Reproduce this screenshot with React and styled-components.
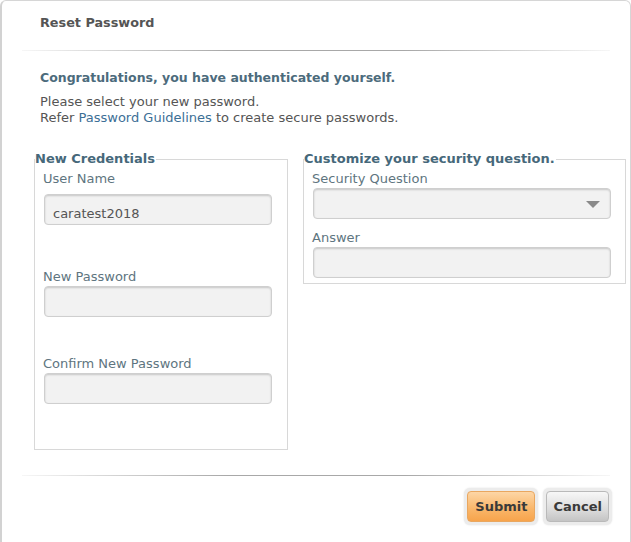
import React from "react";
import styled, { createGlobalStyle } from "styled-components";

const GlobalStyle = createGlobalStyle`
  html, body {
    margin: 0;
    padding: 0;
    background: #ffffff;
  }
  body {
    font-family: "DejaVu Sans", Verdana, sans-serif;
    font-size: 13px;
    color: #555555;
  }
`;

const Card = styled.div`
  box-sizing: border-box;
  width: 631px;
  min-height: 560px;
  border: 1px solid #d6d6d6;
  border-left: 2px solid #d2d2d2;
  border-radius: 6px 6px 0 0;
  background: #fff;
`;

const Header = styled.div`
  height: 42px;
  padding: 0 0 7px 38px;
  display: flex;
  align-items: center;
`;

const Title = styled.h1`
  margin: 0;
  font-size: 12.8px;
  font-weight: bold;
  color: #555;
`;

const Divider = styled.div`
  height: 1px;
  margin: 0 20px;
  background: linear-gradient(
    to right,
    rgba(170, 170, 170, 0.1),
    #a8a8a8 35%,
    #a8a8a8 65%,
    rgba(170, 170, 170, 0.1)
  );
`;

const Intro = styled.div`
  padding: 19px 0 0 38px;
`;

const Congrats = styled.p`
  margin: 0 0 8px;
  font-weight: bold;
  font-size: 12.5px;
  line-height: 16px;
  color: #4c6b7c;
`;

const Line = styled.p`
  margin: 0;
  line-height: 16px;
  color: #555;
`;

const Link = styled.a`
  color: #3c6f96;
  text-decoration: none;
`;

const Columns = styled.div`
  display: flex;
  align-items: flex-start;
  gap: 15px;
  padding: 25px 0 0 32px;
`;

const Group = styled.fieldset`
  box-sizing: border-box;
  width: ${(p) => p.$width}px;
  margin: 0;
  padding: 4px 14px ${(p) => p.$bottom}px 8px;
  border: 1px solid #d8d8d8;
  display: flex;
  flex-direction: column;
`;

const Legend = styled.legend`
  margin-left: -8px;
  padding: 0 1px 0 0;
  font-weight: bold;
  font-size: 13px;
  line-height: 16px;
  color: #46687a;
`;

const Label = styled.label`
  display: block;
  margin-top: ${(p) => p.$top || 0}px;
  line-height: 16px;
  color: #5e7580;
`;

const Input = styled.input`
  box-sizing: border-box;
  display: block;
  width: ${(p) => p.$width}px;
  height: 31px;
  margin: ${(p) => p.$top || 1}px 0 0 1px;
  padding: ${(p) => (p.$low ? "8px 8px 0" : "0 8px")};
  border: 1px solid #cfcfcf;
  border-radius: 4px;
  background: #f2f2f2;
  box-shadow: inset 0 1px 2px rgba(0, 0, 0, 0.18);
  font-family: "DejaVu Sans", Verdana, sans-serif;
  font-size: 13px;
  color: #555;
  outline: none;
`;

const SelectBox = styled.div`
  box-sizing: border-box;
  position: relative;
  width: 298px;
  height: 31px;
  margin: 1px 0 0 1px;
  border: 1px solid #cfcfcf;
  border-radius: 4px;
  background: #f2f2f2;
  box-shadow: inset 0 1px 2px rgba(0, 0, 0, 0.18);
`;

const Arrow = styled.span`
  position: absolute;
  right: 10px;
  top: 12px;
  width: 0;
  height: 0;
  border-left: 7px solid transparent;
  border-right: 7px solid transparent;
  border-top: 7px solid #8a8a8a;
`;

const Footer = styled.div`
  margin-top: 25px;
`;

const Actions = styled.div`
  display: flex;
  justify-content: flex-end;
  gap: 5px;
  padding: 12px 18px 0 0;
`;

const Halo = styled.div`
  padding: 3px;
  border-radius: 6px;
  background: #ececec;
  box-shadow: 0 0 2px rgba(0, 0, 0, 0.12);
`;

const Button = styled.button`
  display: block;
  height: 31px;
  padding: 0 ${(p) => p.$pad}px;
  border: 1px solid ${(p) => (p.$primary ? "#e9a760" : "#b9b9b9")};
  border-radius: 4px;
  background: ${(p) =>
    p.$primary
      ? "linear-gradient(to bottom, #fdd6a6, #f9b568 60%, #f7a44c)"
      : "linear-gradient(to bottom, #f7f7f7, #dcdcdc 60%, #c4c4c4)"};
  font-family: "DejaVu Sans", Verdana, sans-serif;
  font-size: 13px;
  font-weight: 600;
  color: #3a3a3a;
  cursor: pointer;
`;

export default function App() {
  return (
    <>
      <GlobalStyle />
      <Card>
        <Header>
          <Title>Reset Password</Title>
        </Header>
        <Divider />
        <Intro>
          <Congrats>Congratulations, you have authenticated yourself.</Congrats>
          <Line>Please select your new password.</Line>
          <Line>
            Refer <Link href="#">Password Guidelines</Link> to create secure
            passwords.
          </Line>
        </Intro>
        <Columns>
          <Group $width={254} $bottom={45}>
            <Legend>New Credentials</Legend>
            <Label>User Name</Label>
            <Input $width={228} $top={7} $low readOnly value="caratest2018" />
            <Label $top={44}>New Password</Label>
            <Input $width={228} type="password" />
            <Label $top={39}>Confirm New Password</Label>
            <Input $width={228} type="password" />
          </Group>
          <Group $width={323} $bottom={5}>
            <Legend>Customize your security question.</Legend>
            <Label>Security Question</Label>
            <SelectBox>
              <Arrow />
            </SelectBox>
            <Label $top={11}>Answer</Label>
            <Input $width={298} />
          </Group>
        </Columns>
        <Footer>
          <Divider />
          <Actions>
            <Halo>
              <Button $primary $pad={7}>Submit</Button>
            </Halo>
            <Halo>
              <Button $pad={6}>Cancel</Button>
            </Halo>
          </Actions>
        </Footer>
      </Card>
    </>
  );
}
